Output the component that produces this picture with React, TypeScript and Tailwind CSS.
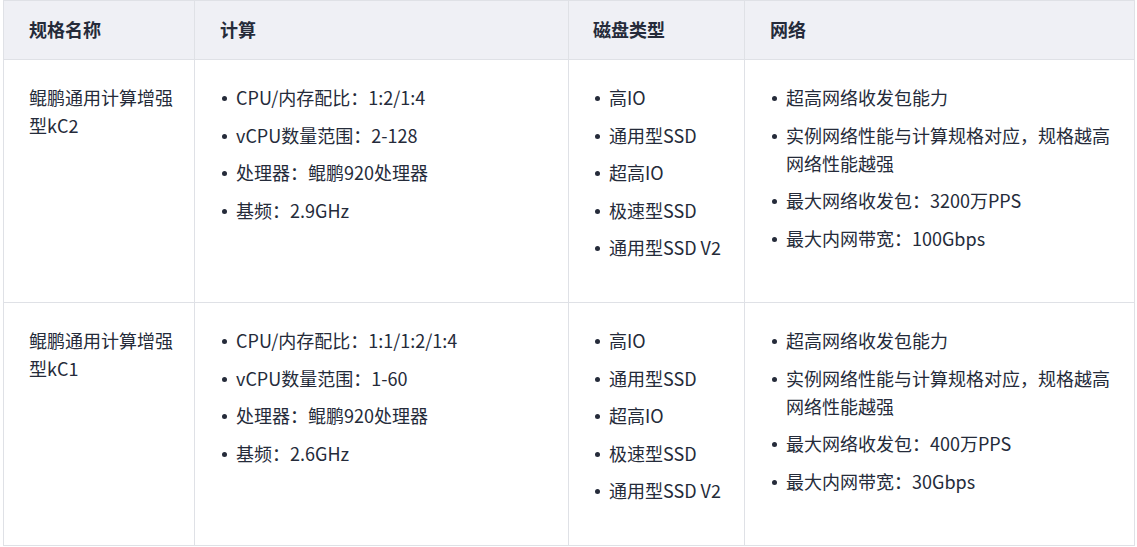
const rows = [
  {
    name: '鲲鹏通用计算增强型kC2',
    compute: ['CPU/内存配比：1:2/1:4', 'vCPU数量范围：2-128', '处理器：鲲鹏920处理器', '基频：2.9GHz'],
    disk: ['高IO', '通用型SSD', '超高IO', '极速型SSD', '通用型SSD V2'],
    network: ['超高网络收发包能力', '实例网络性能与计算规格对应，规格越高网络性能越强', '最大网络收发包：3200万PPS', '最大内网带宽：100Gbps'],
  },
  {
    name: '鲲鹏通用计算增强型kC1',
    compute: ['CPU/内存配比：1:1/1:2/1:4', 'vCPU数量范围：1-60', '处理器：鲲鹏920处理器', '基频：2.6GHz'],
    disk: ['高IO', '通用型SSD', '超高IO', '极速型SSD', '通用型SSD V2'],
    network: ['超高网络收发包能力', '实例网络性能与计算规格对应，规格越高网络性能越强', '最大网络收发包：400万PPS', '最大内网带宽：30Gbps'],
  },
]

function Bullets({ items }: { items: string[] }) {
  return (
    <ul>
      {items.map((t, i) => (
        <li key={i} className={'flex ' + (i > 0 ? 'mt-[9.5px]' : '')}>
          <span className="mt-[13px] ml-[2px] mr-[9px] h-[5px] w-[5px] shrink-0 rounded-full bg-[#252b3a]" />
          <span>{t}</span>
        </li>
      ))}
    </ul>
  )
}

export default function App() {
  return (
    <div className="min-h-screen bg-white" style={{ fontFamily: '"Noto Sans CJK SC", "Noto Sans", sans-serif' }}>
      <table className="ml-[3px] w-[1131px] table-fixed border-collapse text-[18px] leading-7 text-[#252b3a]">
        <colgroup>
          <col className="w-[191px]" />
          <col className="w-[374px]" />
          <col className="w-[176px]" />
          <col className="w-[390px]" />
        </colgroup>
        <thead>
          <tr className="h-[59px] bg-[#eff0f5]">
            <th className="border border-[#dfe1e6] pl-[25px] pb-[3px] text-left font-bold">规格名称</th>
            <th className="border border-[#dfe1e6] pl-[25px] pb-[3px] text-left font-bold">计算</th>
            <th className="border border-[#dfe1e6] pl-[24px] pb-[3px] text-left font-bold">磁盘类型</th>
            <th className="border border-[#dfe1e6] pl-[25px] pb-[3px] text-left font-bold">网络</th>
          </tr>
        </thead>
        <tbody>
          {rows.map((r, i) => (
            <tr key={i} className="h-[243px]">
              <td className="border border-[#dfe1e6] pt-[23px] pb-10 pl-[25px] pr-5 align-top">{r.name}</td>
              <td className="border border-[#dfe1e6] pt-[23px] pb-10 pl-[25px] pr-5 align-top">
                <Bullets items={r.compute} />
              </td>
              <td className="border border-[#dfe1e6] pt-[23px] pb-10 pl-[24px] pr-5 align-top">
                <Bullets items={r.disk} />
              </td>
              <td className="border border-[#dfe1e6] pt-[23px] pb-10 pl-[25px] pr-5 align-top">
                <Bullets items={r.network} />
              </td>
            </tr>
          ))}
        </tbody>
      </table>
    </div>
  )
}
